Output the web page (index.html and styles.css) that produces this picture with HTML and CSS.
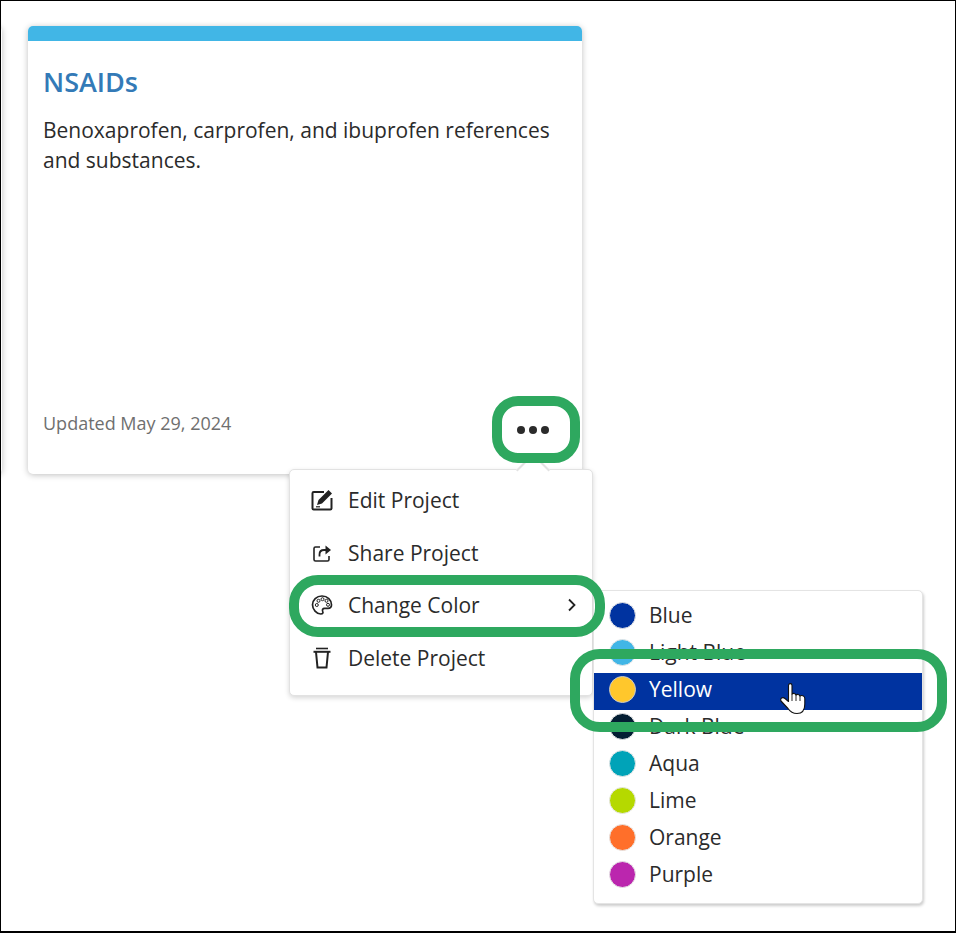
FILE: index.html
```html
<!DOCTYPE html>
<html>
  <head>
    <meta charset="utf-8"/>
    <title>Projects</title>
    <link rel="stylesheet" href="styles.css">
  </head>
  <body>
    <div class="frame">
      <div class="neighbour-card"></div>

      <div class="card">
        <div class="card-bar"></div>
        <div class="card-body">
          <h2 class="card-title">NSAIDs</h2>
          <p class="card-text">Benoxaprofen, carprofen, and ibuprofen references and substances.</p>
        </div>
        <div class="card-footer">
          <span class="card-date">Updated May 29, 2024</span>
          <span class="dots"><i></i><i></i><i></i></span>
        </div>
      </div>

      <!-- project actions menu -->
      <div class="menu">
        <div class="menu-caret"></div>
        <div class="menu-item">
          <svg class="menu-icon" viewBox="0 0 22 22" width="22" height="22">
            <path d="M13 3H2.700Q1.500 3 1.500 4.200V19.300Q1.500 20.500 2.700 20.500H19.300Q20.500 20.500 20.500 19.300V9" fill="none" stroke="#222" stroke-width="2"/>
            <path d="M17.500 1L21 4.500L11 14.500L6 16L7.500 11z" fill="#222"/>
            <path d="M5 17.800H9" stroke="#222" stroke-width="1.200"/>
          </svg>
          <span>Edit Project</span>
        </div>
        <div class="menu-item">
          <svg class="menu-icon" viewBox="0 0 22 22" width="22" height="22">
            <path d="M9 5H4.500Q3 5 3 6.500V17.500Q3 19 4.500 19H16.500Q18 19 18 17.500V14" fill="none" stroke="#222" stroke-width="1.600"/>
            <path d="M8.500 14.500V12.500Q8.500 8 13 8H16" fill="none" stroke="#222" stroke-width="1.800"/>
            <path d="M14.500 3.500L20 8L14.500 12.500z" fill="#222"/>
          </svg>
          <span>Share Project</span>
        </div>
        <div class="menu-item">
          <svg class="menu-icon" viewBox="0 0 22 22" width="22" height="22">
            <path d="M11 2C5.500 2 1.500 6 1.500 10.800C1.500 15.500 5.500 20 9.800 20C12 20 12.300 18.500 11.700 17.300C11 15.800 11.800 14.400 13.500 14.400H17C19.200 14.400 20.500 13 20.500 10.800C20.500 5.800 16.500 2 11 2z" fill="none" stroke="#222" stroke-width="1.700"/>
            <circle cx="5.800" cy="11" r="1.500" fill="none" stroke="#222"/>
            <circle cx="7.500" cy="6.800" r="1.500" fill="none" stroke="#222"/>
            <circle cx="11.500" cy="5.200" r="1.500" fill="none" stroke="#222"/>
            <circle cx="15.500" cy="6.800" r="1.500" fill="none" stroke="#222"/>
            <circle cx="17" cy="10.800" r="1.500" fill="none" stroke="#222"/>
          </svg>
          <span>Change Color</span>
          <svg class="menu-chevron" viewBox="0 0 10 14" width="10" height="14">
            <path d="M2 1.500L7.500 7L2 12.500" fill="none" stroke="#222" stroke-width="1.800"/>
          </svg>
        </div>
        <div class="menu-item">
          <svg class="menu-icon" viewBox="0 0 22 22" width="22" height="22">
            <path d="M5 1.500H17" stroke="#222" stroke-width="1.600"/>
            <path d="M2.500 4.800H19.500" stroke="#222" stroke-width="2"/>
            <path d="M5 5L6.500 20.500H15.500L17 5" fill="none" stroke="#222" stroke-width="2"/>
          </svg>
          <span>Delete Project</span>
        </div>
      </div>

      <!-- colour submenu -->
      <div class="submenu">
        <div class="color-row"><span class="swatch blue"></span>Blue</div>
        <div class="color-row"><span class="swatch light-blue"></span>Light Blue</div>
        <div class="color-row active"><span class="swatch yellow"></span>Yellow</div>
        <div class="color-row"><span class="swatch dark-blue"></span>Dark Blue</div>
        <div class="color-row"><span class="swatch aqua"></span>Aqua</div>
        <div class="color-row"><span class="swatch lime"></span>Lime</div>
        <div class="color-row"><span class="swatch orange"></span>Orange</div>
        <div class="color-row"><span class="swatch purple"></span>Purple</div>
      </div>

      <!-- green annotation outlines drawn on top of the screenshot -->
      <div class="callout callout-dots"></div>
      <div class="callout callout-change"></div>
      <div class="callout callout-yellow"></div>

      <svg class="cursor" viewBox="0 0 26 32" width="26" height="32">
        <path d="M8.500 2.500C8.500 0 12 0 12 2.500V11C13 10 15.500 10.200 16 12C17 11 19.500 11.200 20 13C21.200 12 24.800 12.500 24.800 15.500V21C24.800 27 22 30.500 17 30.500C12.500 30.500 10 28.500 8 25.500L1 18C-0.200 15.500 2.500 13.500 5 15.500L8.500 18.500z" fill="#fff" stroke="#111" stroke-width="1.100" stroke-linejoin="round"/>
        <path d="M12 11V18M16 12V18M20 13V18" stroke="#111" stroke-width="0.900"/>
      </svg>
    </div>
  </body>
</html>
```

FILE: styles.css
```css
* {
  box-sizing: border-box;
}
html, body {
  margin: 0;
  padding: 0;
}
body {
  font-family: "Open Sans", "Liberation Sans", sans-serif;
  color: #2b2b2b;
  background: #fff;
}
.frame {
  position: relative;
  width: 956px;
  height: 933px;
  border: 1px solid #000;
  border-bottom-width: 2px;
  padding: 25px 0 0 27px;
  overflow: hidden;
}
.neighbour-card {
  position: absolute;
  left: -20px;
  top: 25px;
  width: 21px;
  height: 448px;
  background: #fff;
  border-radius: 5px;
  box-shadow: 0 1px 6px rgba(0, 0, 0, 0.25);
}

.card {
  width: 554px;
  height: 448px;
  display: flex;
  flex-direction: column;
  background: #fff;
  border-radius: 5px;
  box-shadow: 0 1px 6px rgba(0, 0, 0, 0.25);
  overflow: hidden;
}
.card-bar {
  height: 15px;
  background: #41b6e6;
}
.card-body {
  flex: 1;
  padding: 24px 15px 0;
}
.card-title {
  margin: 0 0 17px;
  font-size: 27px;
  line-height: 33px;
  font-weight: 600;
  color: #337ab7;
}
.card-text {
  margin: 0;
  font-size: 21px;
  line-height: 30px;
}
.card-footer {
  display: flex;
  justify-content: space-between;
  align-items: center;
  padding: 0 20px 39px 15px;
}
.card-date {
  font-size: 18px;
  line-height: 24px;
  color: #6f6f6f;
}
.dots {
  display: flex;
  gap: 4px;
  margin-top: 13px;
  margin-right: 13px;
}
.dots i {
  width: 8px;
  height: 8px;
  border-radius: 50%;
  background: #2b2b2b;
}

.menu {
  position: absolute;
  left: 288px;
  top: 468px;
  width: 304px;
  height: 227px;
  padding: 4px 0;
  background: #fff;
  border: 1px solid #e2e2e2;
  border-radius: 5px;
  box-shadow: 0 2px 5px rgba(0, 0, 0, 0.16);
}
.menu-caret {
  position: absolute;
  right: 47px;
  top: -12px;
  width: 24px;
  height: 24px;
  background: #fff;
  border-left: 2px solid #e2e2e2;
  border-top: 2px solid #e2e2e2;
  transform: rotate(45deg);
}
.menu-item {
  position: relative;
  display: flex;
  align-items: center;
  height: 52.500px;
  padding: 0 15px 0 21px;
  font-size: 21px;
}
.menu-icon {
  flex: none;
  margin-right: 15px;
}
.menu-chevron {
  margin-left: auto;
}

.submenu {
  position: absolute;
  left: 592px;
  top: 589px;
  width: 330px;
  height: 314px;
  padding: 8px 0 5px;
  background: #fff;
  border: 1px solid #e4e4e4;
  border-radius: 5px;
  box-shadow: 1px 2px 3px rgba(0, 0, 0, 0.2);
}
.color-row {
  display: flex;
  align-items: center;
  height: 37px;
  padding: 0 0 5px 15px;
  font-size: 21px;
}
.color-row.active {
  background: #0033a0;
  color: #fff;
}
.swatch {
  flex: none;
  width: 27px;
  height: 27px;
  margin-right: 13px;
  border-radius: 50%;
  border: 1.500px solid #e6e6e6;
}
.active .swatch {
  border-color: #c9c9c9;
}
.blue { background: #0033a0; }
.light-blue { background: #41b6e6; }
.yellow { background: #ffc72c; }
.dark-blue { background: #041e33; }
.aqua { background: #00a3b8; }
.lime { background: #b5d900; }
.orange { background: #ff6f2a; }
.purple { background: #bb26ae; }

.callout {
  position: absolute;
  border: 10px solid #2ea85f;
  background: transparent;
}
.callout-dots {
  left: 491px;
  top: 395px;
  width: 88px;
  height: 67px;
  border-radius: 26px;
}
.callout-change {
  left: 288px;
  top: 574px;
  width: 316px;
  height: 62px;
  border-radius: 29px;
}
.callout-yellow {
  left: 569px;
  top: 648px;
  width: 377px;
  height: 83px;
  border-radius: 30px;
}
.cursor {
  position: absolute;
  left: 779px;
  top: 682px;
}
```
